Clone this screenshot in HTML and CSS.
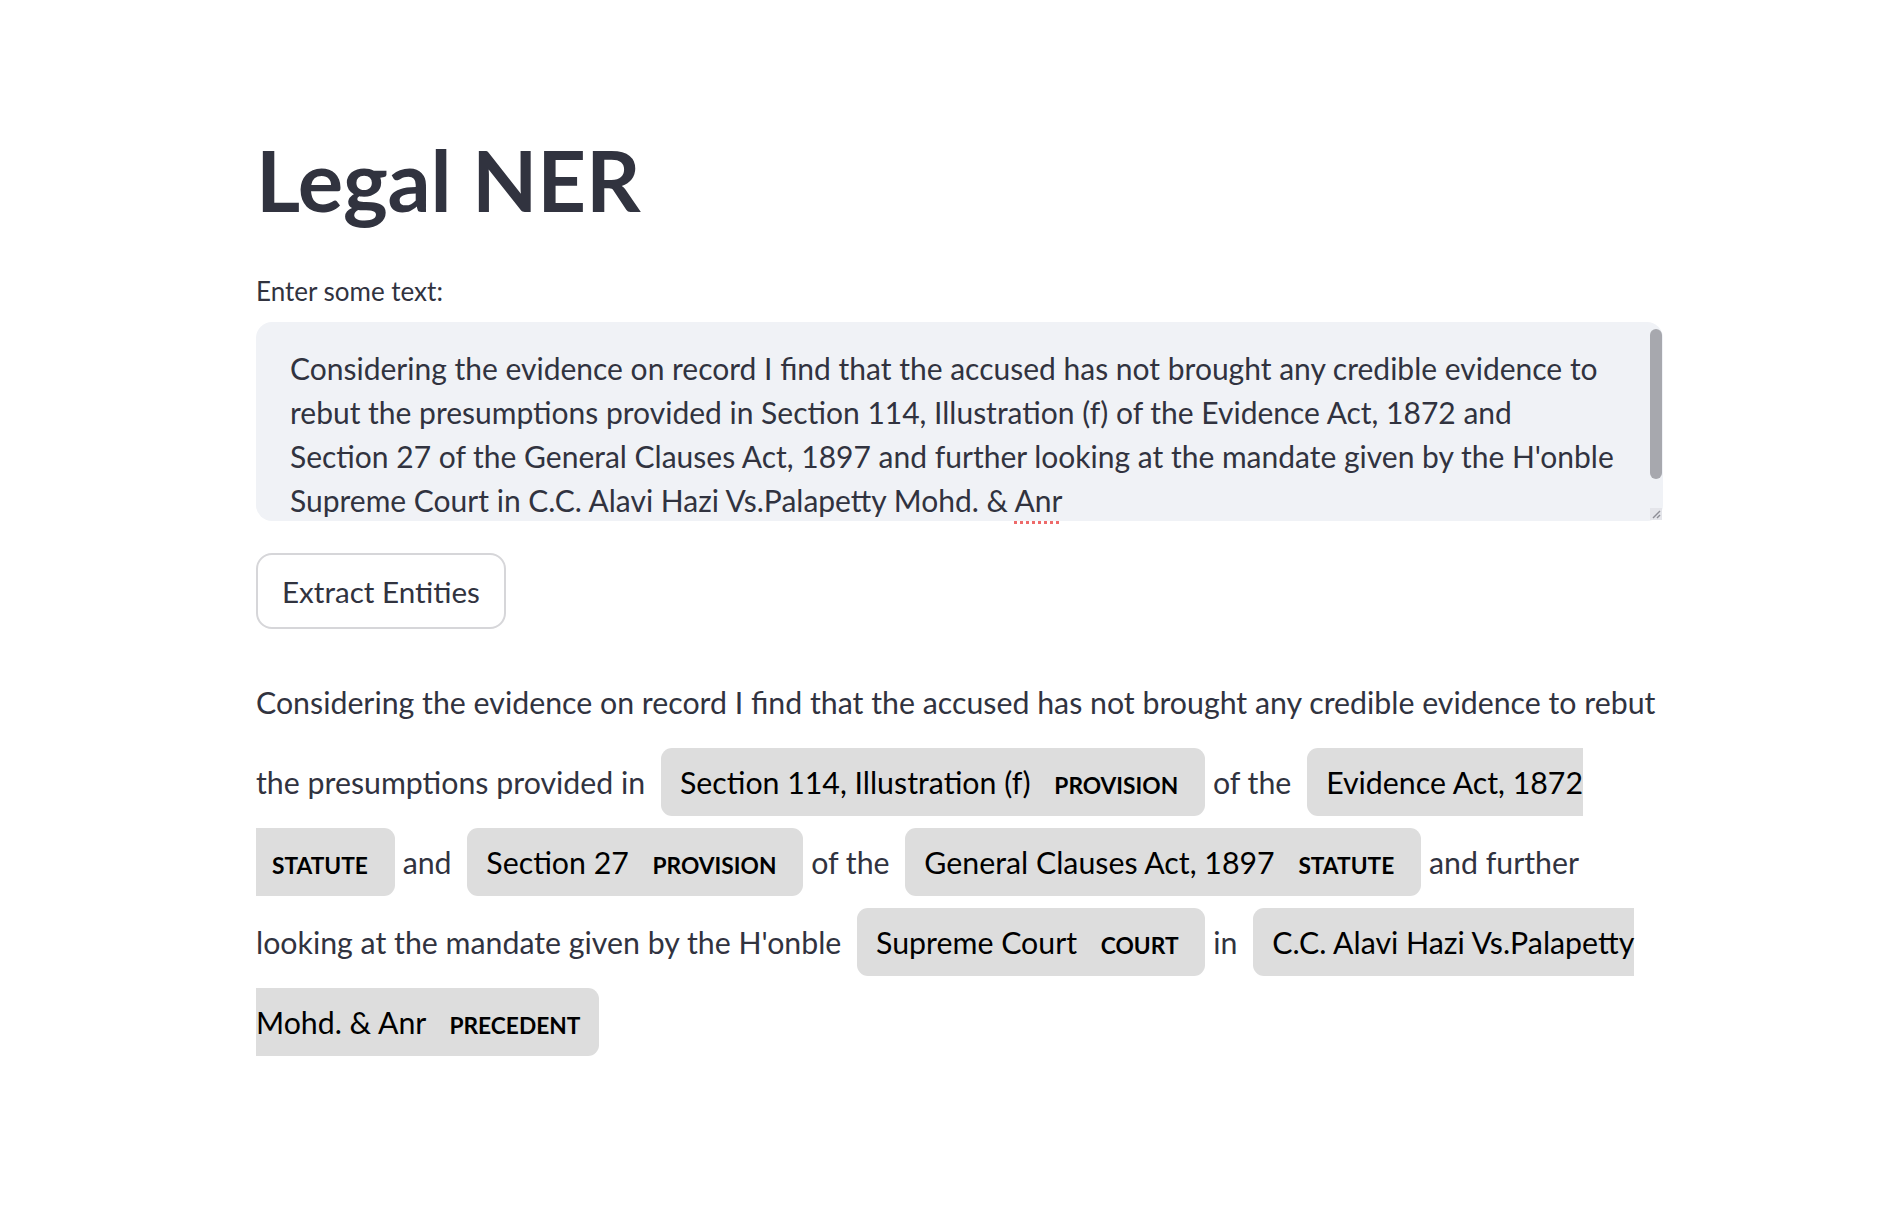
FILE: index.html
```html
<!DOCTYPE html>
<html lang="en">
<head>
<meta charset="utf-8">
<title>Legal NER</title>
<link rel="stylesheet" href="styles.css">
</head>
<body>
<main class="page">
  <h1 class="title">Legal NER</h1>
  <label class="field-label">Enter some text:</label>
  <div class="textarea">
    <div class="textarea-text">Considering the evidence on record I find that the accused has not brought any credible evidence to<br>rebut the presumptions provided in Section 114, Illustration (f) of the Evidence Act, 1872 and<br>Section 27 of the General Clauses Act, 1897 and further looking at the mandate given by the H'onble<br>Supreme Court in C.C. Alavi Hazi Vs.Palapetty Mohd. &amp; <span class="spell">Anr</span></div>
    <div class="scroll-thumb"></div>
    <svg class="resize-grip" width="12" height="12" viewBox="0 0 12 12"><rect x="0" y="0" width="12" height="12" fill="#e4e5ea"/><line x1="3" y1="10" x2="10" y2="3" stroke="#8d8e96" stroke-width="1.4"/><line x1="7" y1="10" x2="10" y2="7" stroke="#8d8e96" stroke-width="1.4"/></svg>
  </div>
  <button class="btn">Extract Entities</button>
  <div class="entities">Considering the evidence on record I find that the accused has not brought any credible evidence to rebut<br>the presumptions provided in <mark class="entity">Section 114, Illustration (f) <span class="ent-label">PROVISION</span> </mark> of the <mark class="entity">Evidence Act, 1872<br><span class="ent-label">STATUTE</span> </mark> and <mark class="entity">Section 27 <span class="ent-label">PROVISION</span> </mark> of the <mark class="entity">General Clauses Act, 1897 <span class="ent-label">STATUTE</span> </mark> and further<br>looking at the mandate given by the H'onble <mark class="entity">Supreme Court <span class="ent-label">COURT</span> </mark> in <mark class="entity">C.C. Alavi Hazi Vs.Palapetty<br>Mohd. &amp; Anr <span class="ent-label">PRECEDENT</span> </mark></div>
</main>
</body>
</html>
```

FILE: styles.css
```css
html, body {
  margin: 0;
  padding: 0;
  background: #ffffff;
}

body {
  font-family: Lato, "Noto Sans", "Liberation Sans", sans-serif;
  color: #31333f;
}

.page {
  width: 1407px;
  padding: 137px 0 100px 256px;
  display: flex;
  flex-direction: column;
  align-items: flex-start;
}

.title {
  margin: 0;
  font-size: 85px;
  line-height: 84px;
  font-weight: 700;
  color: #31333f;
  letter-spacing: -0.2px;
}

.field-label {
  margin-top: 54px;
  font-size: 26px;
  line-height: 32px;
  color: #31333f;
}

.textarea {
  position: relative;
  margin-top: 15px;
  width: 1407px;
  height: 199px;
  box-sizing: border-box;
  background: #f0f2f6;
  border-radius: 16px;
  padding: 24px 40px 0 34px;
}

.textarea-text {
  font-size: 30px;
  line-height: 44px;
  white-space: nowrap;
  color: #31333f;
}

.spell {
  text-decoration: underline dotted #ee6a6a;
  text-decoration-thickness: 3px;
  text-underline-offset: 9px;
}

.scroll-thumb {
  position: absolute;
  right: 1px;
  top: 7px;
  width: 12px;
  height: 150px;
  border-radius: 6px;
  background: #a7a8ae;
}

.resize-grip {
  position: absolute;
  right: 1px;
  bottom: 1px;
}

.btn {
  margin-top: 32px;
  height: 76px;
  padding: 0 24px;
  background: #ffffff;
  border: 2px solid #d6d6d9;
  border-radius: 16px;
  font-family: Lato, "Noto Sans", "Liberation Sans", sans-serif;
  font-size: 29.6px;
  color: #31333f;
}

.entities {
  margin-top: 33px;
  font-size: 30.3px;
  line-height: 80px;
  white-space: nowrap;
  color: #31333f;
}

.entity {
  background: #dddddd;
  color: #000000;
  padding: 16px 19px 16px;
  margin: 0 8px;
  line-height: 1;
  border-radius: 11px;
}

.ent-label {
  font-size: 0.75em;
  font-weight: 700;
  line-height: 1;
  vertical-align: middle;
  margin-left: 16px;
}
```
